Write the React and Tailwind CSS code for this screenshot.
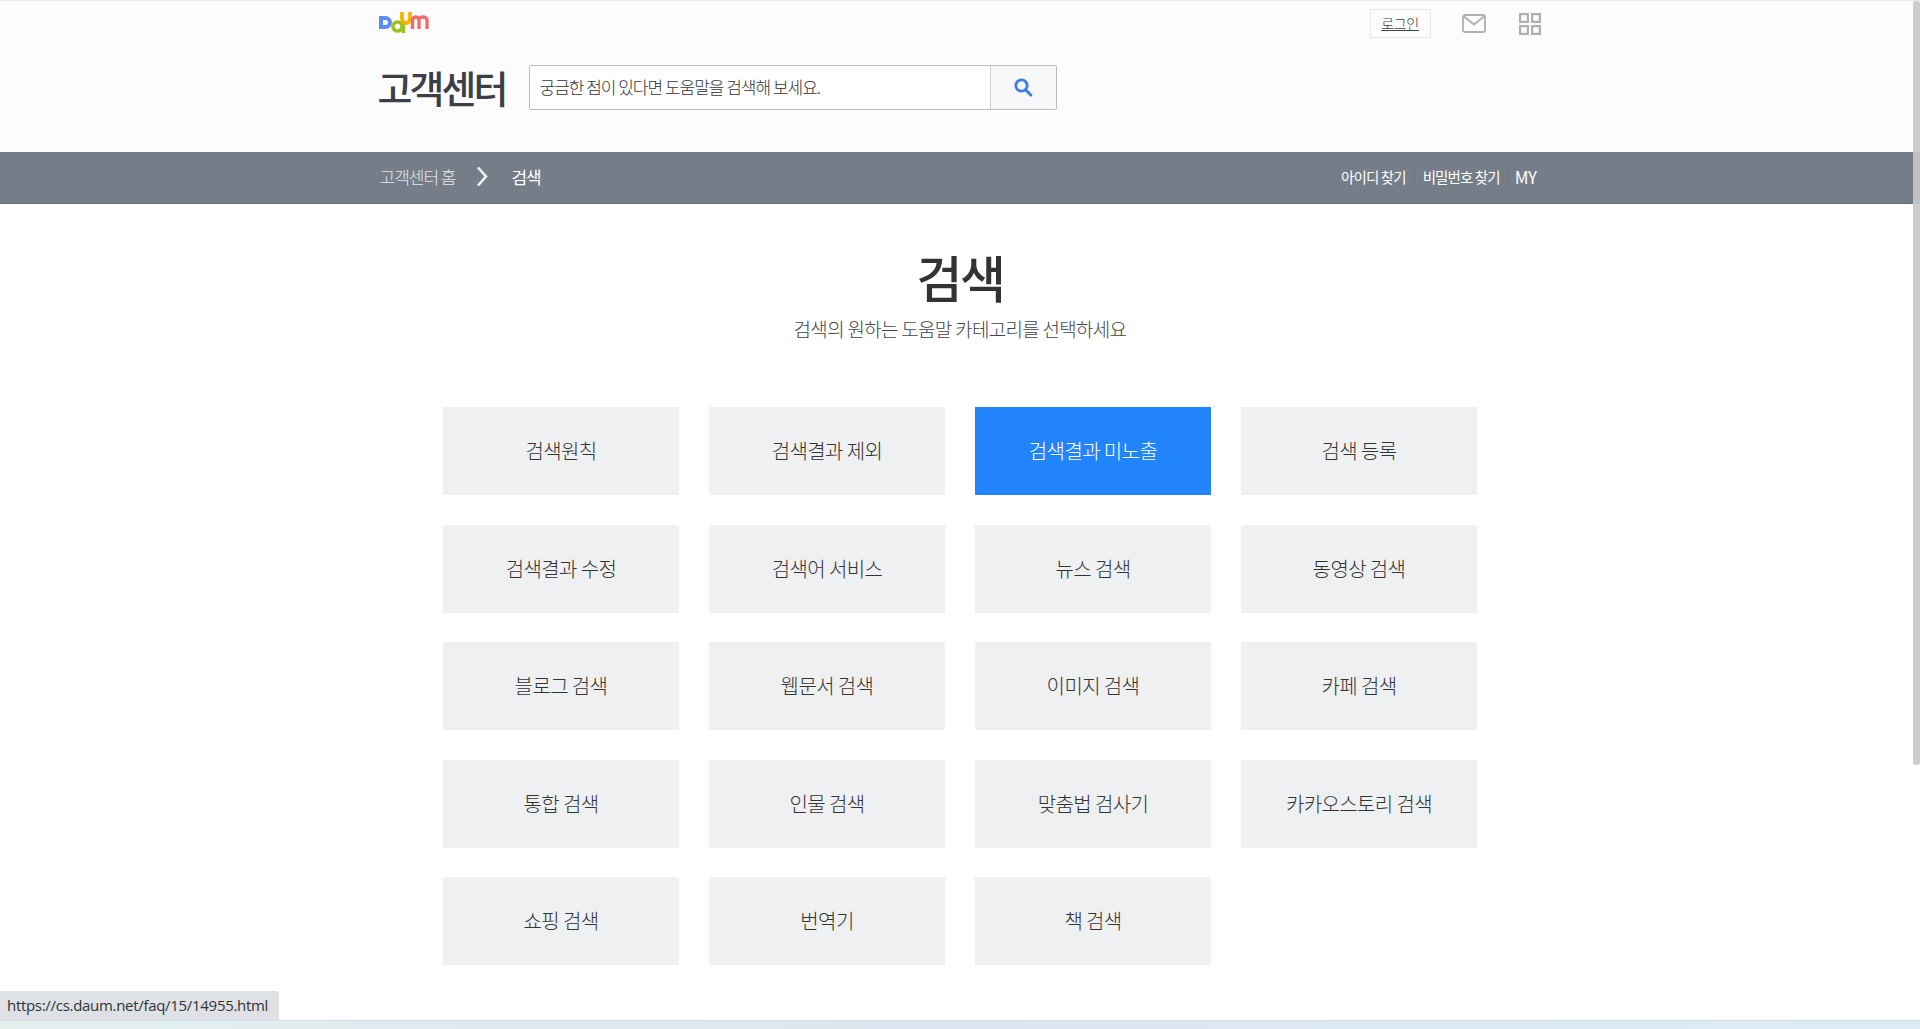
const font = { fontFamily: '"Noto Sans CJK KR", "Noto Sans", sans-serif' };

const items = [
  '검색원칙', '검색결과 제외', '검색결과 미노출', '검색 등록',
  '검색결과 수정', '검색어 서비스', '뉴스 검색', '동영상 검색',
  '블로그 검색', '웹문서 검색', '이미지 검색', '카페 검색',
  '통합 검색', '인물 검색', '맞춤법 검사기', '카카오스토리 검색',
  '쇼핑 검색', '번역기', '책 검색'
];

function Logo() {
  return (
    <svg width="50" height="21" viewBox="0 0 50 21" fill="none">
      <path d="M0 4h6.500a6.500 6.500 0 0 1 0 13H0z" fill="#5b8cf5" />
      <path d="M4 8h2.500a2.500 2.500 0 0 1 0 5H4z" fill="#fcfcfc" />
      <circle cx="18.500" cy="14.500" r="4.500" stroke="#9cc21f" strokeWidth="3.600" />
      <path d="M24.500 9v12" stroke="#9cc21f" strokeWidth="3.400" />
      <path d="M23 0v7a4 4 0 0 0 8 0V0" stroke="#f5b400" strokeWidth="3.800" />
      <path d="M33.500 17V8c0-4 6.500-4 6.500 0v9M40 8c0-4 8-4 8 0v9" stroke="#f56c6c" strokeWidth="3.400" />
    </svg>
  );
}

function SearchIcon() {
  return (
    <svg width="20" height="20" viewBox="0 0 20 20" fill="none">
      <circle cx="8.500" cy="8.500" r="5.700" stroke="#3b7de9" strokeWidth="2.800" />
      <path d="M12.800 13l5 5" stroke="#3b7de9" strokeWidth="3" strokeLinecap="round" />
    </svg>
  );
}

function MailIcon() {
  return (
    <svg width="24" height="19" viewBox="0 0 24 19" fill="none" stroke="#b0b0b0" strokeWidth="1.800">
      <rect x="1" y="1" width="22" height="17" rx="2" />
      <path d="M1.500 2l10.500 8.500L22.500 2" />
    </svg>
  );
}

function GridIcon() {
  return (
    <svg width="22" height="22" viewBox="0 0 22 22" fill="none" stroke="#b0b0b0" strokeWidth="2.200">
      <rect x="1.100" y="1.100" width="7.800" height="7.800" />
      <rect x="13.100" y="1.100" width="7.800" height="7.800" />
      <rect x="1.100" y="13.100" width="7.800" height="7.800" />
      <rect x="13.100" y="13.100" width="7.800" height="7.800" />
    </svg>
  );
}

function App() {
  return (
    <div className="relative h-screen overflow-hidden flex flex-col bg-white" style={font}>
      {/* Header */}
      <div className="h-[152px] bg-[#fcfcfc] border-t border-[#e8e8e8]">
        <div className="w-[1165px] mx-auto">
          <div className="flex justify-between items-start h-[63px]">
            <div className="pt-[11px] pl-[1px]"><Logo /></div>
            <div className="flex items-center pt-[8px] pr-[2px]">
              <a className="w-[61px] h-[29px] border border-[#e6e6e6] flex items-center justify-center text-[14px] font-light tracking-[-0.3px] text-[#444] underline">로그인</a>
              <div className="ml-[31px]"><MailIcon /></div>
              <div className="ml-[33px]"><GridIcon /></div>
            </div>
          </div>
          <div className="flex items-center">
            <h1 className="w-[151px] text-[38px] leading-[46px] font-medium tracking-[-3px] text-[#3c3f46]">고객센터</h1>
            <div className="flex w-[528px] h-[45px] border border-[#bdbdbd] rounded-[2px] bg-white">
              <div className="flex-1 flex items-center pl-[10px] text-[17px] font-light tracking-[-1px] text-[#333]">궁금한 점이 있다면 도움말을 검색해 보세요.</div>
              <div className="w-[66px] border-l border-[#cfcfcf] bg-[#f8f8f8] flex items-center justify-center"><SearchIcon /></div>
            </div>
          </div>
        </div>
      </div>

      {/* Nav bar */}
      <div className="h-[52px] bg-[#757d89] border-b border-[#666d78]">
        <div className="w-[1165px] mx-auto h-full flex justify-between items-center pb-[2px] pl-[2px]">
          <div className="flex items-center">
            <span className="text-[17px] font-light tracking-[-1px] text-[#e4e6e9]">고객센터 홈</span>
            <svg className="ml-[21px]" width="13" height="21" viewBox="0 0 13 21" fill="none" stroke="#f2f2f2" strokeWidth="2.600">
              <path d="M2 1.500l8 9-8 9" />
            </svg>
            <span className="ml-[22px] text-[17px] tracking-[-1px] text-white">검색</span>
          </div>
          <div className="flex items-center text-[14.500px] tracking-[-0.900px] text-white pr-[6px]">
            <span>아이디 찾기</span>
            <span className="w-px h-[13px] bg-[#6a717c] mx-[8px]"></span>
            <span>비밀번호 찾기</span>
            <span className="w-px h-[13px] bg-[#6a717c] mx-[7px]"></span>
            <span className="text-[17px] tracking-[-0.500px]">MY</span>
          </div>
        </div>
      </div>

      {/* Main */}
      <div className="flex-1 flex flex-col items-center">
        <h2 className="mt-[42px] text-[50px] leading-[60px] font-medium tracking-[-2.500px] text-[#333]">검색</h2>
        <p className="mt-[9px] text-[19px] leading-[28px] font-light tracking-[-0.700px] text-[#444]">검색의 원하는 도움말 카테고리를 선택하세요</p>
        <div className="mt-[64px] grid grid-cols-[repeat(4,236px)] auto-rows-[88px] gap-x-[30px] gap-y-[29.500px]">
          {items.map((item) => (
            <a
              key={item}
              className={
                item === '검색결과 미노출'
                  ? 'flex items-center justify-center bg-[#2284fb] text-white text-[20px] font-light tracking-[-0.600px]'
                  : 'flex items-center justify-center bg-[#eff0f2] text-[#333] text-[20px] font-light tracking-[-0.600px]'
              }>
              {item}
            </a>
          ))}
        </div>
      </div>

      {/* Bottom strip behind the browser window */}
      <div className="h-[9px] bg-gradient-to-r from-[#e3f0ee] via-[#dce5f0] to-[#dcedf5] border-t border-[#d3dbe3]"></div>

      {/* Status bubble */}
      <div className="absolute left-0 bottom-[9px] w-[279px] h-[29px] bg-[#dee1e6] rounded-tr-[3px] flex items-center pl-[7px] text-[15px] text-[#333] font-['Open_Sans',sans-serif] tracking-[-0.300px]">
        https://cs.daum.net/faq/15/14955.html
      </div>

      {/* Scrollbar */}
      <div className="absolute right-[0px] top-[1px] w-[7px] h-[764px] bg-[#c8c8c8]/90 rounded-[3px]"></div>
    </div>
  );
}

export default App;
